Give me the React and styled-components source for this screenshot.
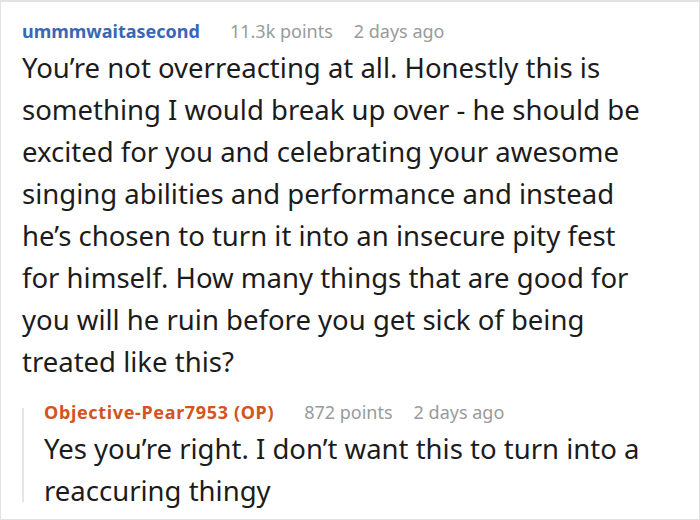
import React from 'react'
import styled, { createGlobalStyle } from 'styled-components'

const GlobalStyle = createGlobalStyle`
  html, body {
    margin: 0;
    padding: 0;
    background: #ffffff;
  }
  body {
    font-family: 'Noto Sans', 'Open Sans', sans-serif;
  }
`

const Frame = styled.div`
  box-sizing: border-box;
  width: 700px;
  height: 520px;
  border: 1px solid #e2e2e2;
  border-top-width: 2px;
  background: #fff;
  padding: 15px 46px 0 21px;
  overflow: hidden;
`

const Comment = styled.div`
  display: flex;
  flex-direction: column;
`

const Meta = styled.div`
  display: flex;
  align-items: baseline;
  gap: 21px;
  font-size: 18px;
  line-height: 28px;
  color: #9a9a9a;
  white-space: nowrap;
  margin-top: ${(p) => (p.$nested ? '-10px' : '0')};
`

const Author = styled.span`
  font-weight: 700;
  color: ${(p) => (p.$op ? '#d35322' : '#3a67b3')};
  letter-spacing: ${(p) => (p.$op ? '0.65px' : '0')};
  margin-right: 9px;
`

const Body = styled.p`
  margin: 2px 0 0;
  font-size: 27.5px;
  line-height: 42px;
  color: #1c1c1c;
`

const Reply = styled.div`
  margin-top: 25px;
  border-left: 2px solid #e6e6e6;
  padding-left: 20px;
  display: flex;
  flex-direction: column;
  height: 94px;
`

const App = () => (
  <>
    <GlobalStyle />
    <Frame>
      <Comment>
        <Meta>
          <Author>ummmwaitasecond</Author>
          <span>11.3k points</span>
          <span>2 days ago</span>
        </Meta>
        <Body>
          You’re not overreacting at all. Honestly this is something I would break up over - he should be
          excited for you and celebrating your awesome singing abilities and performance and instead
          he’s chosen to turn it into an insecure pity fest for himself. How many things that are good for
          you will he ruin before you get sick of being treated like this?
        </Body>
      </Comment>
      <Reply>
        <Meta $nested>
          <Author $op>Objective-Pear7953 (OP)</Author>
          <span>872 points</span>
          <span>2 days ago</span>
        </Meta>
        <Body>Yes you’re right. I don’t want this to turn into a reaccuring thingy</Body>
      </Reply>
    </Frame>
  </>
)

export default App
